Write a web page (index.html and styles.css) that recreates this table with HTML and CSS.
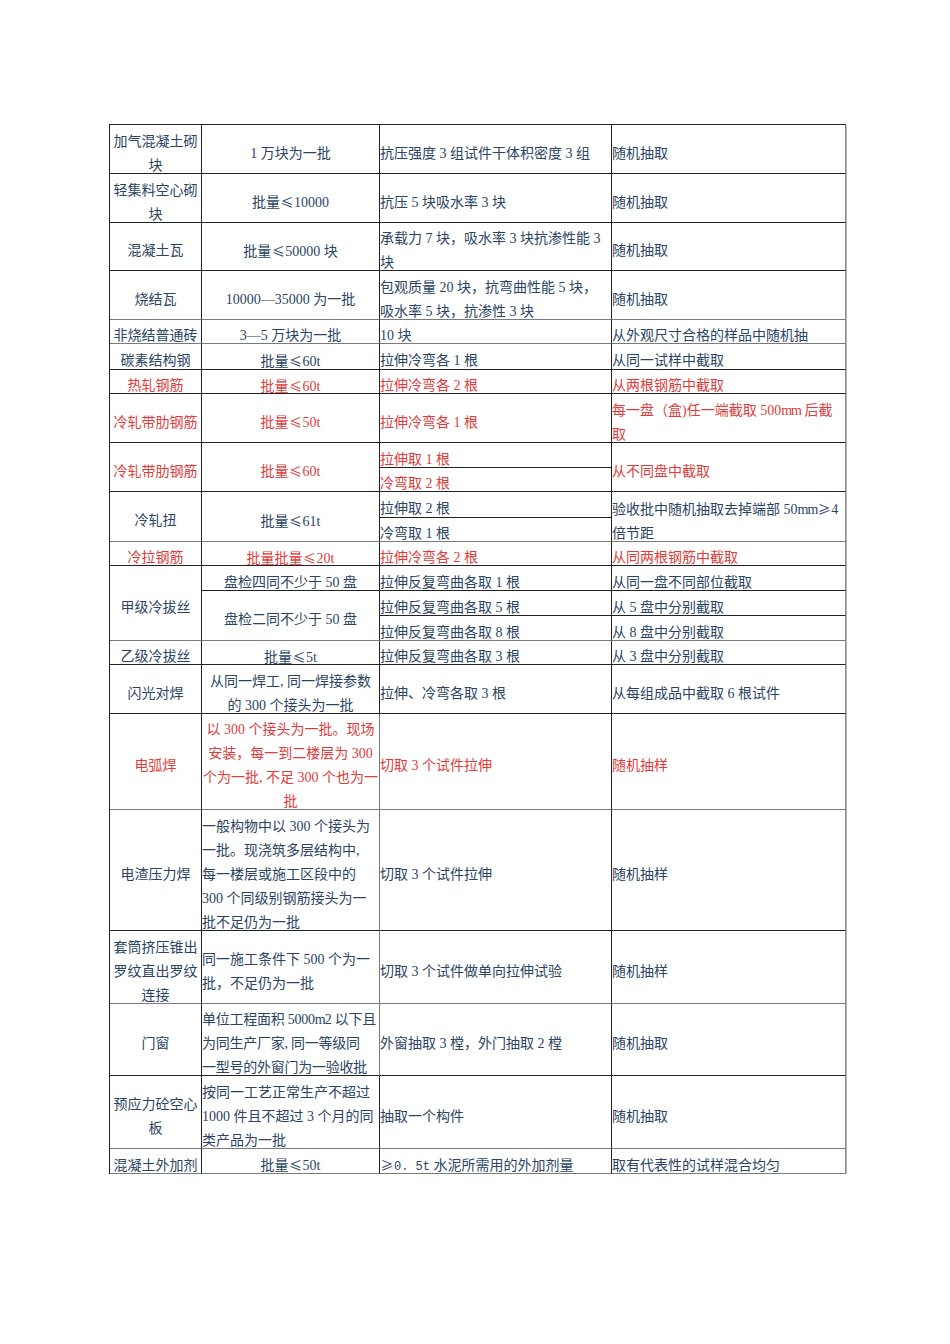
FILE: index.html
```html
<!DOCTYPE html>
<html lang="zh-CN">
<head>
<meta charset="utf-8">
<title>检验批抽样</title>
<link rel="stylesheet" href="styles.css">
</head>
<body>
<div class="sheet">
  <div class="cell c"><p>加气混凝土砌<br>块</p></div>
  <div class="cell c"><p>1 万块为一批</p></div>
  <div class="cell"><p>抗压强度 3 组试件干体积密度 3 组</p></div>
  <div class="cell last"><p>随机抽取</p></div>

  <div class="cell c"><p>轻集料空心砌<br>块</p></div>
  <div class="cell c"><p>批量<span class="sym">≤</span>10000</p></div>
  <div class="cell"><p>抗压 5 块吸水率 3 块</p></div>
  <div class="cell last"><p>随机抽取</p></div>

  <div class="cell c"><p>混凝土瓦</p></div>
  <div class="cell c"><p>批量<span class="sym">≤</span>50000 块</p></div>
  <div class="cell"><p>承载力 7 块，吸水率 3 块抗渗性能 3<br>块</p></div>
  <div class="cell last"><p>随机抽取</p></div>

  <div class="cell c gb"><p>烧结瓦</p></div>
  <div class="cell c gb"><p>10000—35000 为一批</p></div>
  <div class="cell gb"><p>包观质量 20 块，抗弯曲性能 5 块，<br>吸水率 5 块，抗渗性 3 块</p></div>
  <div class="cell last gb"><p>随机抽取</p></div>

  <div class="cell c gb"><p>非烧结普通砖</p></div>
  <div class="cell c gb"><p>3—5 万块为一批</p></div>
  <div class="cell gb"><p>10 块</p></div>
  <div class="cell last gb"><p>从外观尺寸合格的样品中随机抽</p></div>

  <div class="cell c"><p>碳素结构钢</p></div>
  <div class="cell c"><p>批量<span class="sym">≤</span>60t</p></div>
  <div class="cell"><p>拉伸冷弯各 1 根</p></div>
  <div class="cell last"><p>从同一试样中截取</p></div>

  <div class="cell c r"><p>热轧钢筋</p></div>
  <div class="cell c r"><p>批量<span class="sym">≤</span>60t</p></div>
  <div class="cell r"><p>拉伸冷弯各 2 根</p></div>
  <div class="cell last r"><p>从两根钢筋中截取</p></div>

  <div class="cell c r"><p>冷轧带肋钢筋</p></div>
  <div class="cell c r"><p>批量<span class="sym">≤</span>50t</p></div>
  <div class="cell r"><p>拉伸冷弯各 1 根</p></div>
  <div class="cell last r"><p>每一盘（盒)任一端截取 500<span class="mm">mm</span> 后截<br>取</p></div>

  <div class="cell c r span2"><p>冷轧带肋钢筋</p></div>
  <div class="cell c r span2"><p>批量<span class="sym">≤</span>60t</p></div>
  <div class="cell r"><p>拉伸取 1 根</p></div>
  <div class="cell last r span2"><p>从不同盘中截取</p></div>
  <div class="cell r"><p>冷弯取 2 根</p></div>

  <div class="cell c span2 gb"><p>冷轧扭</p></div>
  <div class="cell c span2 gb"><p>批量<span class="sym">≤</span>61t</p></div>
  <div class="cell"><p>拉伸取 2 根</p></div>
  <div class="cell last span2 gb"><p>验收批中随机抽取去掉端部 50<span class="mm">mm</span><span class="sym">≥</span>4<br>倍节距</p></div>
  <div class="cell gb"><p>冷弯取 1 根</p></div>

  <div class="cell c r"><p>冷拉钢筋</p></div>
  <div class="cell c r"><p>批量批量<span class="sym">≤</span>20t</p></div>
  <div class="cell r"><p>拉伸冷弯各 2 根</p></div>
  <div class="cell last r"><p>从同两根钢筋中截取</p></div>

  <div class="cell c span3 gb"><p>甲级冷拔丝</p></div>
  <div class="cell c"><p>盘检四同不少于 50 盘</p></div>
  <div class="cell"><p>拉伸反复弯曲各取 1 根</p></div>
  <div class="cell last"><p>从同一盘不同部位截取</p></div>
  <div class="cell c span2 gb"><p>盘检二同不少于 50 盘</p></div>
  <div class="cell"><p>拉伸反复弯曲各取 5 根</p></div>
  <div class="cell last"><p>从 5 盘中分别截取</p></div>
  <div class="cell gb"><p>拉伸反复弯曲各取 8 根</p></div>
  <div class="cell last gb"><p>从 8 盘中分别截取</p></div>

  <div class="cell c"><p>乙级冷拔丝</p></div>
  <div class="cell c"><p>批量<span class="sym">≤</span>5t</p></div>
  <div class="cell"><p>拉伸反复弯曲各取 3 根</p></div>
  <div class="cell last"><p>从 3 盘中分别截取</p></div>

  <div class="cell c"><p>闪光对焊</p></div>
  <div class="cell c"><p>从同一焊工, 同一焊接参数<br>的 300 个接头为一批</p></div>
  <div class="cell"><p>拉伸、冷弯各取 3 根</p></div>
  <div class="cell last"><p>从每组成品中截取 6 根试件</p></div>

  <div class="cell c r gb"><p>电弧焊</p></div>
  <div class="cell c r gb gr"><p>以 300 个接头为一批。现场<br>安装，每一到二楼层为 300<br>个为一批, 不足 300 个也为一<br>批</p></div>
  <div class="cell r gb"><p>切取 3 个试件拉伸</p></div>
  <div class="cell last r gb"><p>随机抽样</p></div>

  <div class="cell c"><p>电渣压力焊</p></div>
  <div class="cell gr"><p>一般构物中以 300 个接头为<br>一批。现浇筑多层结构中,<br>每一楼层或施工区段中的<br>300 个同级别钢筋接头为一<br>批不足仍为一批</p></div>
  <div class="cell"><p>切取 3 个试件拉伸</p></div>
  <div class="cell last"><p>随机抽样</p></div>

  <div class="cell c gb"><p>套筒挤压锥出<br>罗纹直出罗纹<br>连接</p></div>
  <div class="cell gb gr"><p>同一施工条件下 500 个为一<br>批，不足仍为一批</p></div>
  <div class="cell gb"><p>切取 3 个试件做单向拉伸试验</p></div>
  <div class="cell last gb"><p>随机抽样</p></div>

  <div class="cell c"><p>门窗</p></div>
  <div class="cell tight gr"><p>单位工程面积 5000<span class="mm">m</span>2 以下且<br>为同生产厂家, 同一等级同<br>一型号的外窗门为一验收批</p></div>
  <div class="cell"><p>外窗抽取 3 樘，外门抽取 2 樘</p></div>
  <div class="cell last"><p>随机抽取</p></div>

  <div class="cell c gb"><p>预应力砼空心<br>板</p></div>
  <div class="cell gb"><p>按同一工艺正常生产不超过<br>1000 件且不超过 3 个月的同<br>类产品为一批</p></div>
  <div class="cell gb"><p>抽取一个构件</p></div>
  <div class="cell last gb"><p>随机抽取</p></div>

  <div class="cell c gb"><p>混凝土外加剂</p></div>
  <div class="cell c gb"><p>批量<span class="sym">≤</span>50t</p></div>
  <div class="cell gb"><p><span class="sym">≥</span><span class="mono">0. 5t</span> 水泥所需用的外加剂量</p></div>
  <div class="cell last gb"><p>取有代表性的试样混合均匀</p></div>
</div>
</body>
</html>
```

FILE: styles.css
```css
html, body {
  margin: 0;
  padding: 0;
  background: #ffffff;
}

body {
  width: 950px;
  min-height: 1344px;
  font-family: "Liberation Serif", "Noto Sans CJK SC", serif;
  font-size: 14px;
  line-height: 24px;
  color: #2b4463;
}

.sheet {
  margin: 124px 0 0 109px;
  width: 736px;
  display: grid;
  grid-template-columns: 92px 178px 232px 234px;
  grid-template-rows:
    49px 49px 48px 49px 24px 26px 24px 49px
    25px 24px 26px 24px 24px
    25px 25px 25px 24px
    49px 96px 121px 73px 72px 73px 25px;
  border-top: 1px solid #222222;
  border-left: 1px solid #222222;
}

.cell {
  box-sizing: border-box;
  display: flex;
  flex-direction: column;
  justify-content: center;
  padding: 9px 0 0 0;
  overflow: visible;
  white-space: nowrap;
  border-right: 1px solid #222222;
  border-bottom: 1px solid #222222;
  text-align: left;
}

.cell p {
  margin: 0;
}

.c {
  text-align: center;
}

.r {
  color: #e23b3b;
}

.last {
  border-right: 1px solid #8c8c8c;
  box-shadow: 1px 0 0 #b5b5b5;
}

.gb {
  border-bottom-color: #7a7a7a;
}

.gr {
  border-right-color: #7a7a7a;
}

.span2 {
  grid-row: span 2;
}

.span3 {
  grid-row: span 3;
}

.tight {
  letter-spacing: -0.25px;
}

.sym {
  display: inline-block;
  width: 14px;
  text-align: center;
  font-family: "Noto Sans CJK SC", "DejaVu Sans", sans-serif;
  font-size: 13px;
  line-height: 24px;
}

.mm {
  letter-spacing: -1px;
}

.mono {
  font-family: "Liberation Mono", "Noto Sans CJK SC", monospace;
  font-size: 12px;
}
```
